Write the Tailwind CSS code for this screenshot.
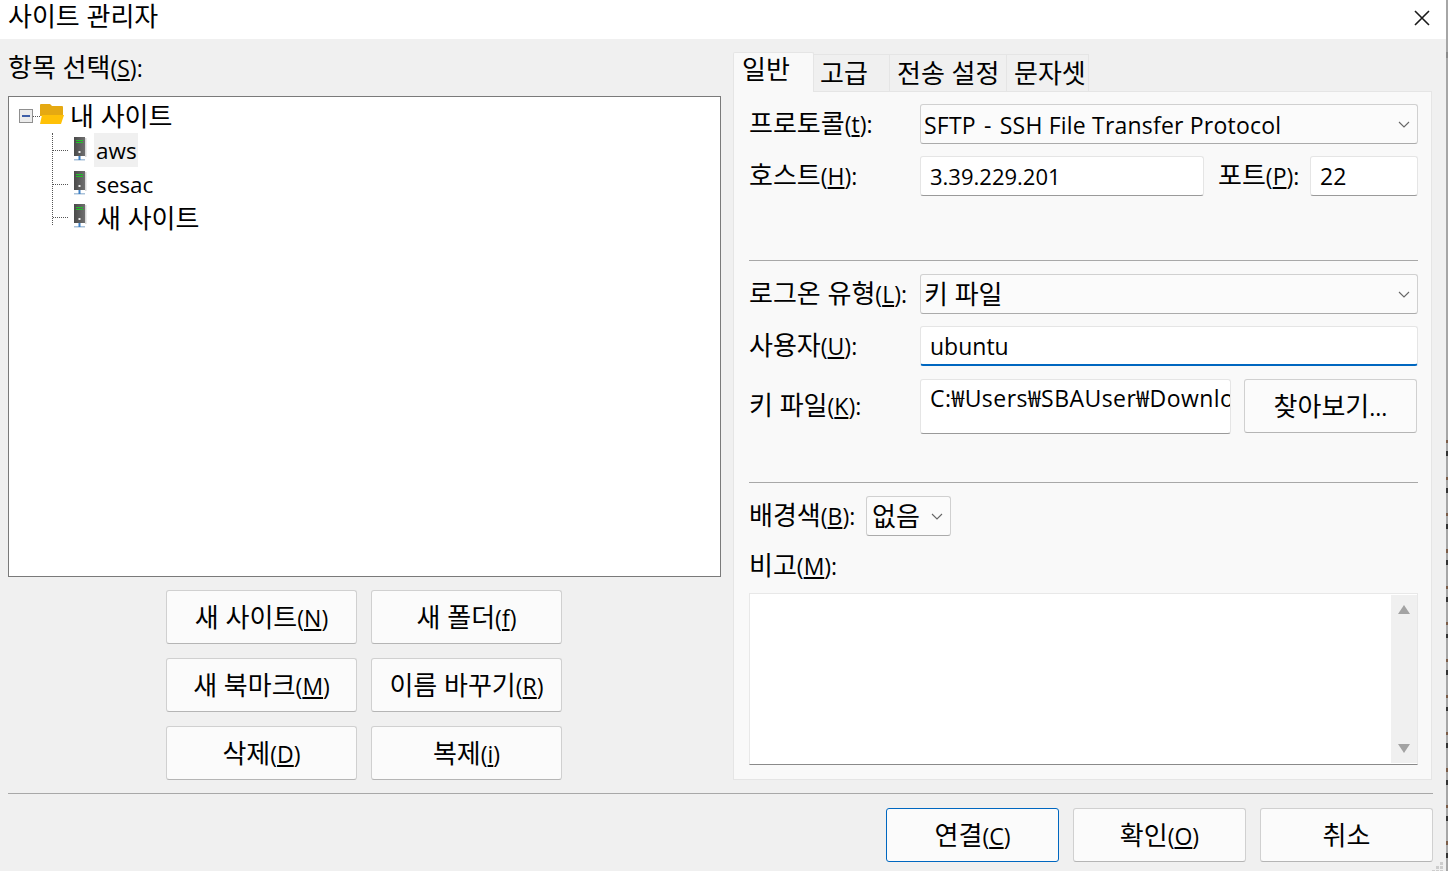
<!DOCTYPE html>
<html lang="ko">
<head>
  <meta charset="UTF-8" />
  <title>사이트 관리자</title>
  <script src="https://cdn.jsdelivr.net/npm/@tailwindcss/browser@4"></script>
</head>
<body class="bg-[#f0f0f0] text-black font-['Open_Sans','Noto_Sans_CJK_KR',sans-serif] text-[23px] leading-none overflow-hidden">

<svg class="absolute w-0 h-0">
  <defs>
    <linearGradient id="serverBody" x1="0" x2="1" y1="0" y2="0"><stop offset="0" stop-color="#4a4a4a"/><stop offset="1" stop-color="#6f6f6f"/></linearGradient>
  </defs>
  <symbol id="server" viewBox="0 0 14 26">
    <rect x="1" y="0" width="11" height="19" fill="url(#serverBody)"/>
    <rect x="12" y="1" width="1.5" height="19" fill="#d8d8d8"/>
    <rect x="3" y="3" width="7" height="1" fill="#22c02a"/>
    <rect x="3" y="5" width="7" height="1" fill="#22c02a"/>
    <rect x="5.5" y="14" width="2" height="2" fill="#eee"/>
    <rect x="1" y="22" width="11" height="1.5" fill="#a9c2da"/>
    <rect x="5.5" y="19" width="2" height="4" fill="#3d7fc4"/>
  </symbol>
</svg>

<div class="flex w-[1448px] h-[871px]">
  <div class="relative w-[1446px] h-[871px] flex flex-col">

    <!-- title bar -->
    <header class="h-[39px] bg-white flex items-center justify-between pl-[8px] pr-[15px]">
      <span class="text-[26px] -mt-[7px]">사이트 관리자</span>
      <svg class="w-[18px] h-[18px] -mt-[4px]" viewBox="0 0 18 18" fill="none" stroke="#1a1a1a" stroke-width="1.6"><path d="M2 2l14 14M16 2L2 16"/></svg>
    </header>

    <div class="flex h-[741px] pl-[8px]">
      <!-- left column -->
      <section class="w-[713px] flex flex-col">
        <div class="h-[57px] flex items-center"><span class="-mt-[1px]"><span class="text-[26px]">항목 선택</span>(<u>S</u>):</span></div>

        <div class="relative h-[481px] bg-white border border-[#7a7a7a] pl-[10px] pt-[2px]">
          <div class="flex items-center h-[34px]">
            <span class="w-[14px] h-[14px] border border-[#8f8f8f] bg-[#ececec] flex items-center justify-center"><span class="w-[8px] h-[1.5px] bg-[#3f5fa8]"></span></span>
            <span class="w-[7px] border-t border-dotted border-[#555]"></span>
            <svg class="w-[26px] h-[22px] -mt-[2px]" viewBox="0 0 26 22"><path d="M0 1q0-1 1-1h9l2 2h10q1 0 1 1v9H0z" fill="#e5a912"/><path d="M2 11h22l-3 9H0z" fill="#ffc107"/></svg>
            <span class="ml-[4px] text-[26px]">내 사이트</span>
          </div>

          <div class="absolute left-[43px] top-[36px] h-[92px] border-l border-dotted border-[#555]"></div>

          <div class="flex items-center h-[34px] pl-[34px]">
            <span class="w-[15px] border-t border-dotted border-[#555]"></span>
            <svg class="w-[14px] h-[26px] ml-[5px]" viewBox="0 0 14 26"><use href="#server"/></svg>
            <span class="ml-[7px] h-[34px] w-[44px] bg-[#f0f0f0] pl-[2px] pt-[2px] flex items-center text-[22.5px]">aws</span>
          </div>
          <div class="flex items-center h-[34px] pl-[34px]">
            <span class="w-[15px] border-t border-dotted border-[#555]"></span>
            <svg class="w-[14px] h-[26px] ml-[5px]" viewBox="0 0 14 26"><use href="#server"/></svg>
            <span class="ml-[9px] mt-[2px] text-[22.5px]">sesac</span>
          </div>
          <div class="flex items-center h-[32px] pl-[34px]">
            <span class="w-[15px] border-t border-dotted border-[#555]"></span>
            <svg class="w-[14px] h-[26px] ml-[5px]" viewBox="0 0 14 26"><use href="#server"/></svg>
            <span class="ml-[10px] mt-[1px] text-[26px]">새 사이트</span>
          </div>
        </div>

        <div class="grid grid-cols-[191px_191px] gap-x-[14px] gap-y-[14px] mt-[13px] ml-[158px]">
          <button class="h-[54px] bg-[#fbfbfb] border border-[#d0d0d0] border-b-[#b5b5b5] rounded-[3px]"><span class="text-[26px]">새 사이트</span>(<u>N</u>)</button>
          <button class="h-[54px] bg-[#fbfbfb] border border-[#d0d0d0] border-b-[#b5b5b5] rounded-[3px]"><span class="text-[26px]">새 폴더</span>(<u>f</u>)</button>
          <button class="h-[54px] bg-[#fbfbfb] border border-[#d0d0d0] border-b-[#b5b5b5] rounded-[3px]"><span class="text-[26px]">새 북마크</span>(<u>M</u>)</button>
          <button class="h-[54px] bg-[#fbfbfb] border border-[#d0d0d0] border-b-[#b5b5b5] rounded-[3px]"><span class="text-[26px]">이름 바꾸기</span>(<u>R</u>)</button>
          <button class="h-[54px] bg-[#fbfbfb] border border-[#d0d0d0] border-b-[#b5b5b5] rounded-[3px]"><span class="text-[26px]">삭제</span>(<u>D</u>)</button>
          <button class="h-[54px] bg-[#fbfbfb] border border-[#d0d0d0] border-b-[#b5b5b5] rounded-[3px]"><span class="text-[26px]">복제</span>(<u>i</u>)</button>
        </div>
      </section>

      <!-- right column: tabs and panel -->
      <section class="ml-[12px] w-[699px] flex flex-col pt-[13px]">
        <div class="flex items-end h-[40px] -mb-px relative z-10 text-[26px]">
          <div class="h-[40px] w-[81px] bg-[#f9f9f9] border border-b-0 border-[#e5e5e5] pl-[8px] pt-[3px] rounded-t-[2px]">일반</div>
          <div class="h-[38px] w-[76px] bg-[#f0f0f0] border border-l-0 border-[#e5e5e5] pl-[6px] pt-[5px]">고급</div>
          <div class="h-[38px] w-[117px] bg-[#f0f0f0] border border-l-0 border-[#e5e5e5] pl-[7px] pt-[5px]">전송 설정</div>
          <div class="h-[38px] w-[82px] bg-[#f0f0f0] border border-l-0 border-[#e5e5e5] pl-[7px] pt-[5px]">문자셋</div>
        </div>

        <div class="h-[689px] bg-[#f9f9f9] border border-[#e5e5e5] pl-[15px] pr-[13px] pt-[12px] flex flex-col">
          <div class="flex items-center h-[40px]">
            <label class="w-[171px] -mt-[2px]"><span class="text-[26px]">프로토콜</span>(<u>t</u>):</label>
            <div class="flex-1 h-[40px] bg-[#fbfbfb] border border-[#d0d0d0] border-b-[#ababab] rounded-[3px] flex items-center justify-between pl-[3px] pr-[7px]">
              <span class="tracking-[0.2px] mt-[2px]">SFTP <span class="mx-[2px]">-</span> SSH File Transfer Protocol</span>
              <svg class="w-[12px] h-[7px]" viewBox="0 0 12 7" fill="none" stroke="#666" stroke-width="1.1"><path d="M1 1l5 5 5-5"/></svg>
            </div>
          </div>

          <div class="flex items-center h-[40px] mt-[12px]">
            <label class="w-[171px] -mt-[2px]"><span class="text-[26px]">호스트</span>(<u>H</u>):</label>
            <div class="w-[284px] h-[40px] bg-white border border-[#e5e5e5] border-b-[#9a9a9a] rounded-[3px] flex items-center pl-[9px] text-[22px]">3.39.229.201</div>
            <label class="ml-[14px] w-[92px] -mt-[2px]"><span class="text-[26px]">포트</span>(<u>P</u>):</label>
            <div class="flex-1 h-[40px] bg-white border border-[#e5e5e5] border-b-[#9a9a9a] rounded-[3px] flex items-center pl-[9px]">22</div>
          </div>

          <div class="mt-[64px] border-t border-[#a8a8a8]"></div>

          <div class="flex items-center h-[40px] mt-[13px]">
            <label class="w-[171px] -mt-[2px]"><span class="text-[26px]">로그온 유형</span>(<u>L</u>):</label>
            <div class="flex-1 h-[40px] bg-[#fbfbfb] border border-[#d0d0d0] border-b-[#ababab] rounded-[3px] flex items-center justify-between pl-[3px] pr-[7px]">
              <span class="text-[26px]">키 파일</span>
              <svg class="w-[12px] h-[7px]" viewBox="0 0 12 7" fill="none" stroke="#666" stroke-width="1.1"><path d="M1 1l5 5 5-5"/></svg>
            </div>
          </div>

          <div class="flex items-center h-[40px] mt-[12px]">
            <label class="w-[171px] -mt-[2px]"><span class="text-[26px]">사용자</span>(<u>U</u>):</label>
            <div class="flex-1 h-[40px] bg-white border border-[#e5e5e5] border-b-2 border-b-[#0067c0] rounded-[3px] flex items-center pl-[9px] pt-[2px]">ubuntu</div>
          </div>

          <div class="flex h-[55px] mt-[13px]">
            <label class="w-[171px] pt-[13px]"><span class="text-[26px]">키 파일</span>(<u>K</u>):</label>
            <div class="w-[311px] h-[55px] bg-white border border-[#e5e5e5] border-b-[#9a9a9a] rounded-[3px] pl-[9px] pt-[7px] overflow-hidden whitespace-nowrap tracking-[0.45px]">C:₩Users₩SBAUser₩Downloads</div>
            <button class="ml-[13px] w-[173px] h-[54px] bg-[#fbfbfb] border border-[#d0d0d0] border-b-[#b5b5b5] rounded-[3px]"><span class="text-[26px]">찾아보기</span>...</button>
          </div>

          <div class="mt-[48px] border-t border-[#a8a8a8]"></div>

          <div class="flex items-center h-[40px] mt-[13px]">
            <label class="w-[117px] -mt-[2px] whitespace-nowrap"><span class="text-[26px]">배경색</span>(<u>B</u>):</label>
            <div class="w-[85px] h-[40px] bg-[#fbfbfb] border border-[#d0d0d0] border-b-[#ababab] rounded-[3px] flex items-center justify-between pl-[5px] pr-[7px]">
              <span class="text-[26px]">없음</span>
              <svg class="w-[12px] h-[7px]" viewBox="0 0 12 7" fill="none" stroke="#666" stroke-width="1.1"><path d="M1 1l5 5 5-5"/></svg>
            </div>
          </div>

          <label class="mt-[16px] h-[41px]"><span class="text-[26px]">비고</span>(<u>M</u>):</label>

          <div class="h-[172px] bg-white border border-[#e8e8e8] border-b-[#8a8a8a] flex justify-end">
            <div class="w-[26px] bg-[#f0f0f0] my-[1px] flex flex-col justify-between items-center py-[10px]">
              <svg class="w-[12px] h-[9px]" viewBox="0 0 12 9" fill="#a3a3a3"><path d="M6 0l6 9H0z"/></svg>
              <svg class="w-[12px] h-[9px]" viewBox="0 0 12 9" fill="#a3a3a3"><path d="M0 0h12L6 9z"/></svg>
            </div>
          </div>
        </div>
      </section>
    </div>

    <!-- dialog footer -->
    <div class="mt-[13px] ml-[8px] w-[1425px] border-t border-[#a8a8a8]"></div>
    <footer class="flex justify-end gap-[14px] mt-[14px] pr-[13px]">
      <button class="w-[173px] h-[54px] bg-[#fbfbfb] border border-[#0067c0] rounded-[3px]"><span class="text-[26px]">연결</span>(<u>C</u>)</button>
      <button class="w-[173px] h-[54px] bg-[#fbfbfb] border border-[#d0d0d0] border-b-[#b5b5b5] rounded-[3px]"><span class="text-[26px]">확인</span>(<u>O</u>)</button>
      <button class="w-[173px] h-[54px] bg-[#fbfbfb] border border-[#d0d0d0] border-b-[#b5b5b5] rounded-[3px] text-[26px]">취소</button>
    </footer>

    <!-- resize grip -->
    <svg class="absolute left-[1432px] top-[862px] w-[12px] h-[9px]" viewBox="0 0 12 9" fill="#cdcdcd"><rect x="8" y="0" width="3" height="3"/><rect x="4" y="4" width="3" height="3"/><rect x="8" y="4" width="3" height="3"/><rect x="0" y="8" width="3" height="1"/><rect x="4" y="8" width="3" height="1"/><rect x="8" y="8" width="3" height="1"/></svg>
  </div>

  <!-- sliver of the window behind -->
  <div class="w-[2px] h-[871px] flex flex-col bg-[#a6a6a6]">
    <div class="h-[52px]"></div>
    <div class="h-[6px] bg-[#8a8a8a]"></div>
    <div class="h-[382px]"></div>
    <div class="flex-1 bg-[repeating-linear-gradient(to_bottom,#7a5c48_0,#7a5c48_3px,#a6a6a6_3px,#a6a6a6_11px,#333333_11px,#333333_16px,#a6a6a6_16px,#a6a6a6_36.5px)]"></div>
  </div>
</div>

</body>
</html>
